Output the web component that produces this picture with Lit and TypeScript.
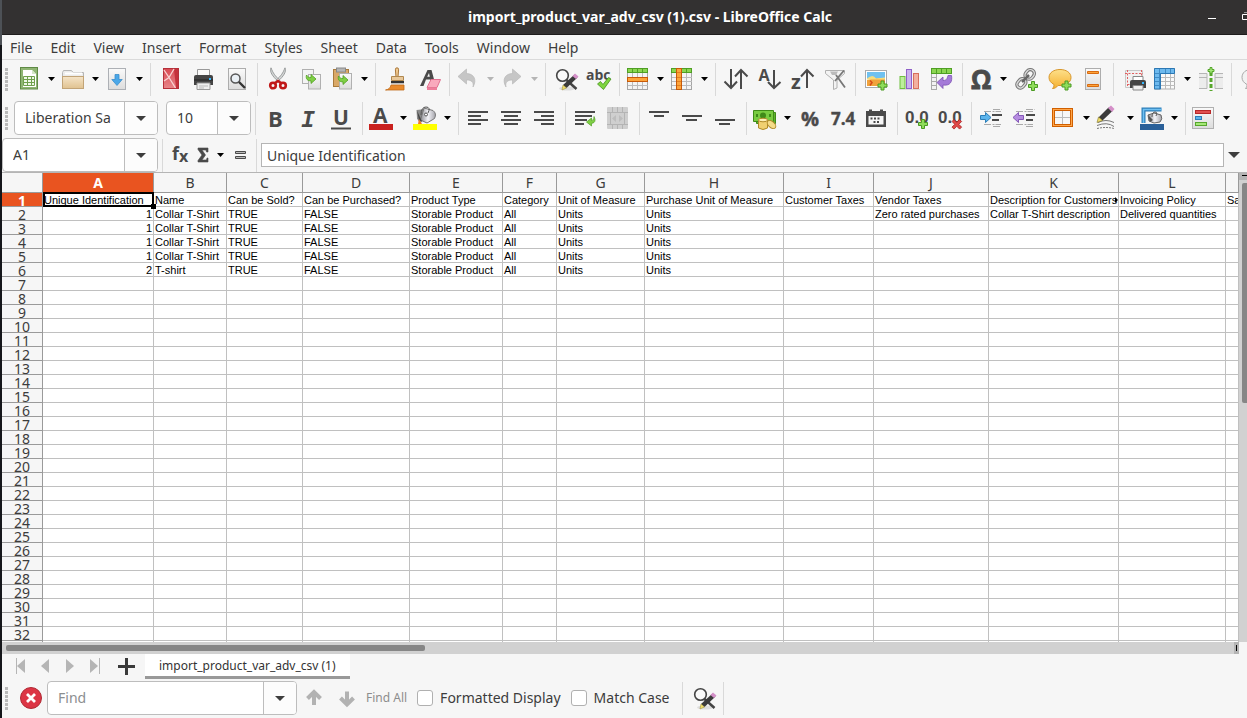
import { LitElement, html, svg, css, nothing } from "lit";
import { customElement, state } from "lit/decorators.js";
import { classMap } from "lit/directives/class-map.js";

const INK = "#4a4a4a";

const plus = (x: number, y: number) => svg`
  <path transform="translate(${x} ${y})" d="M3.5 .5h3v3h3v3h-3v3h-3v-3h-3v-3h3z" fill="#8fdc5a" stroke="#4a9a22"/>`;

const icons: Record<string, unknown> = {
  new: svg`
    <rect x="3.5" y=".5" width="17" height="21.5" fill="#8fb573" stroke="#5f8a45"/>
    <path d="M6 3h9l4 4v13H6z" fill="#fff"/><path d="M15 3l4 4h-4z" fill="#d5e6c8"/>
    <path d="M6.500 9.500h11v9h-11zM6.500 12.500h11M6.500 15.500h11M10.500 9.500v9M14.500 9.500v9" fill="#eef7e7" stroke="#6fa04c"/>`,
  open: svg`
    <path d="M1.500 21.500v-16l1-2h8l1.500 2h10.500v16z" fill="#ececec" stroke="#b5b5b5"/>
    <path d="M4 6.500h17" stroke="#fff" stroke-width="2"/>
    <rect x="1.500" y="9.500" width="21" height="12" fill="url(#tan)" stroke="#c2a477"/>`,
  save: svg`
    <rect x="3.500" y="1.500" width="17" height="21" fill="url(#paper)" stroke="#adb0b5"/>
    <path d="M10 7.500h4v5h3.200l-5.200 6-5.200-6H10z" fill="#4aa7e8" stroke="#3b8ecb" stroke-width=".8"/>`,
  pdf: svg`
    <rect x="5.500" y="1.500" width="15" height="20" fill="url(#red)" stroke="#b5303a"/>
    <path d="M16 2h4v19h-2z" fill="#c4323c"/>
    <path d="M6 3l5 7.500L6 14M11 10.500L16 2M11 10.500L17.500 21" fill="none" stroke="#f8d4d4" stroke-width="1.300"/>`,
  print: svg`
    <path d="M6.500 10V2.500h12V10" fill="#fafafa" stroke="#999"/>
    <path d="M3 10q0-2 2-2h15q2 0 2 2v8H3z" fill="#454545"/><path d="M3 13h19" stroke="#222"/>
    <rect x="18" y="11" width="2" height="2" fill="#36b8ff"/>
    <path d="M6 16h13v6.500H6z" fill="#eee" stroke="#999"/><path d="M8 19h9M8 21h5" stroke="#bbb"/>`,
  preview: svg`
    <rect x="4.500" y="1.500" width="17" height="21" fill="url(#paper)" stroke="#adadad"/>
    <path d="M14 14l7 7" stroke="#333" stroke-width="2.400"/><circle cx="11.500" cy="11.500" r="4.500" fill="#eaf0f5" stroke="#555" stroke-width="1.500"/>`,
  cut: svg`
    <path d="M6 .8c-1.500 4 1 8 7.500 14l1.500-1.500C10 9 8 6 6 .8zM20 .8c1.500 4-1 8-7.500 14L11 13.300C16 9 18 6 20 .8z" fill="#d5d7d7" stroke="#878a8a" stroke-width=".8"/>
    <g fill="none" stroke="#c01818" stroke-width="2.600"><circle cx="8" cy="18.500" r="2.800"/><circle cx="18" cy="18.500" r="2.800"/><path d="M10 16l3-2 3 2"/></g>`,
  copy: svg`
    <rect x="4.500" y="2.500" width="11" height="14" fill="#f4f4f4" stroke="#b0b0b0"/><rect x="10.500" y="7.500" width="12" height="14.500" fill="url(#paper)" stroke="#b0b0b0"/>
    <path d="M8.500 8c-1 4 1 6 4.500 5.800V16.500l5-4.500-5-4.500v3c-2 .2-3-.5-4.500-2.500z" fill="#7fcf45" stroke="#4f9f20" stroke-width=".8"/>`,
  paste: svg`
    <rect x="3.500" y="2.500" width="15" height="17" fill="#d9a867" stroke="#a87a3c"/><rect x="6.500" y="1" width="9" height="4" fill="#b5b5b5" stroke="#888"/>
    <rect x="9.500" y="6.500" width="12" height="15.500" fill="url(#paper)" stroke="#b0b0b0"/>
    <path d="M8.500 9c-1 4 1 6 4.500 5.800V17.500l5-4.500-5-4.500v3c-2 .2-3-.5-4.500-2.500z" fill="#7fcf45" stroke="#4f9f20" stroke-width=".8"/>`,
  brush: svg`
    <path d="M14 .8q1.800 0 1.600 2l-.6 7h-2l-.6-7q-.2-2 1.600-2z" fill="#f0c98f" stroke="#a8763a"/>
    <path d="M8.500 9.500h12v4h-12z" fill="#e8c89a" stroke="#b08850"/><path d="M8 14h13v2.500H8z" fill="#333"/><path d="M8 16.500h13V18H8z" fill="#eee"/>
    <path d="M8 18h13v5H2.500c3-.5 5-2 5.500-5z" fill="#e88a2c" stroke="#c06a18" stroke-width=".8"/>`,
  clear: svg`
    <path d="M4 19L11.500 3h4L19 16h-4l-.7-3.500H10L7.500 19zM11.200 9.800h2.600L13 6z" fill="${INK}" fill-rule="evenodd"/>
    <path d="M15 12.500h9.500l-3.500 8h-10z" fill="#f9a9bd" stroke="#e0708f"/><path d="M11 20.500h10v2.500H11z" fill="#ee7f9c"/>`,
  undo: svg`<path d="M2 9.500l8.500-7.500v4.500c7 0 11 6 6.500 13.500 1-5-1.500-7-6.500-7v4z" fill="#c6c6c6" stroke="#b4b4b4" stroke-width=".6"/>`,
  redo: svg`<path d="M21 9.500L12.500 2v4.500c-7 0-11 6-6.500 13.500-1-5 1.500-7 6.500-7v4z" fill="#c6c6c6" stroke="#b4b4b4" stroke-width=".6"/>`,
  find: svg`
    <ellipse cx="14" cy="21.500" rx="8" ry="2" fill="#ddd"/>
    <path d="M13.500 13l10 9" stroke="#444" stroke-width="2.500"/><circle cx="9.500" cy="8.500" r="5.800" fill="#fafafa" stroke="#444" stroke-width="1.600"/>
    <path d="M21.500 7.500l3 3L13.500 21l-3.500-3z" fill="#3b3b3b"/><path d="M19.500 9l2.500-2.500 3.500 3L23 12z" fill="#d48fc8"/><path d="M10 18l3.500 3-4.500 2z" fill="#f0dd6a" stroke="#96882c" stroke-width=".5"/>`,
  spell: svg`
    <text x="0" y="13" class="glyph" font-size="14" fill="${INK}">abc</text>
    <path d="M11.500 17l3-2.500 2.500 3 5.500-7 2.500 1.500-7.500 10.500z" fill="#7ed63f" stroke="#46901c" stroke-width=".8"/>`,
  rows: svg`
    <rect x="1.500" y="1.500" width="20" height="21" fill="#f4f4f4" stroke="#a5a5a5"/><path d="M6.500 5v17M11.500 5v17M16.500 5v17M2 18.500h20" stroke="#bbb"/>
    <rect x="1.500" y="1.500" width="20" height="4" fill="#8bd650" stroke="#4f9f24"/><path d="M6.500 2v4M11.500 2v4M16.500 2v4" stroke="#4f9f24"/>
    <rect x="1.500" y="10.500" width="20" height="4" fill="#fda43a" stroke="#c85a08"/>`,
  cols: svg`
    <rect x="1.500" y="1.500" width="20" height="21" fill="#f4f4f4" stroke="#a5a5a5"/><path d="M16.500 5v17M2 10.500h20M2 14.500h20M2 18.500h20" stroke="#bbb"/>
    <rect x="1.500" y="1.500" width="20" height="4" fill="#8bd650" stroke="#4f9f24"/><path d="M16.500 2v4" stroke="#4f9f24"/>
    <rect x="6.500" y="1.500" width="5" height="21" fill="#fda43a" stroke="#c85a08"/><path d="M7 5.500h4M7 10.500h4M7 14.500h4M7 18.500h4" stroke="#c85a08" opacity=".5"/>`,
  sort: svg`<path d="M8 2v18M1.500 14.500L8 21l6-6.500M18 22V3M12 9.500L18 3l6.500 6.500" fill="none" stroke="${INK}" stroke-width="2"/>`,
  asc: svg`<text x="2.500" y="14" class="glyph" font-size="16" fill="${INK}">A</text><path d="M18 3v18M12 15l6 6 6.500-6" fill="none" stroke="${INK}" stroke-width="2"/>`,
  desc: svg`<text x="2" y="22" class="glyph" font-size="20" fill="${INK}">z</text><path d="M18 21V3M12 9.500L18 3l6.500 6.500" fill="none" stroke="${INK}" stroke-width="2"/>`,
  filter: svg`
    <path d="M3.500 3.500h19v3L15 13v8l-3.500 1.500V13L3.500 6.500z" fill="#f3f3f3" stroke="#b0b0b0"/>
    <path d="M8 4.500h8L14 8h-4z" fill="#bbb"/><path d="M14 8l9 12.500M22 3.500L13 14" stroke="#777" stroke-width="1.800"/>`,
  image: svg`
    <rect x="2.500" y="3.500" width="21" height="17" fill="#fff" stroke="#aaa"/><path d="M4 5h18v7H4z" fill="#6fc1f0"/><path d="M4 13q9-3 18-1v7H4z" fill="#f0a23c"/>
    <path d="M4 11.500q6-5 9 0l9-1v2H4z" fill="#f7dc7c"/><path d="M7 13.500l2 2-2 3" stroke="#d84a18" stroke-width="1.500" fill="none"/>${plus(14.5, 13.5)}`,
  chart: svg`
    <rect x="4" y="9.500" width="5" height="12" fill="#bdee9c" stroke="#6fbf3f"/><rect x="10.500" y="2.500" width="5" height="19" fill="#cbb0ee" stroke="#8f60c8"/>
    <rect x="17.500" y="6.500" width="5" height="15" fill="#f2b0a0" stroke="#d8705c"/><path d="M2.500 22.500h21.500" stroke="#ddd"/>`,
  pivot: svg`
    <rect x="2.500" y="6" width="5" height="16.500" fill="#f3f3f3" stroke="#aaa"/><path d="M3 10.500h4M3 14.500h4M3 18.500h4" stroke="#aaa"/>
    <rect x="2.500" y="1.500" width="20" height="5" fill="#8bd650" stroke="#4f9f24"/><path d="M7.500 2v4M12.500 2v4M17.500 2v4" stroke="#4f9f24"/>
    <path d="M8 15.500l6-5.500v3.500c4 0 4-2 5-5h3.500c1 6-1 10.500-8.500 9.500v3.500z" fill="#a47ad8" stroke="#7c50b4" stroke-width=".8"/>`,
  omega: svg`<text x="2" y="22" class="glyph" font-size="26" fill="${INK}" stroke="${INK}" stroke-width=".8">Ω</text>`,
  link: svg`
    <g fill="none"><g stroke="#777" stroke-width="3.400"><rect x="12" y="2.500" width="8" height="10" rx="4" transform="rotate(40 16 7)"/><rect x="4" y="11" width="7" height="10" rx="3.500" transform="rotate(40 7 16)"/></g>
    <g stroke="#ddd" stroke-width="1.400"><rect x="12" y="2.500" width="8" height="10" rx="4" transform="rotate(40 16 7)"/><rect x="4" y="11" width="7" height="10" rx="3.500" transform="rotate(40 7 16)"/></g><path d="M8 15l7-7" stroke="#666" stroke-width="2.500"/></g>${plus(14, 14)}`,
  comment: svg`
    <path d="M13 2.500c6 0 11 3 11 8s-5 8-11 8c-1 0-1.500 0-2 0-1.500 2-3.500 3-5.500 3 1-1 1.500-2.500 1.500-4C4 16 2 13.500 2 10.500c0-5 5-8 11-8z" fill="url(#amber)" stroke="#d8962a"/>${plus(14.5, 13.5)}`,
  header: svg`
    <rect x="5.500" y="1.500" width="15" height="21" fill="url(#paper)" stroke="#adadad"/>
    <path d="M7.500 4.500h11v2h-11zM7.500 17.500h11v2h-11z" fill="#fda43a" stroke="#d86a10"/>`,
  printarea: svg`
    <path d="M4.500 3.500h17v17h-17z" fill="#f1f1f1" stroke="#c8c8c8"/><path d="M6.500 3v17M20.500 3v8M4 6.500h18M6.500 17.500h5" stroke="#e06060" stroke-dasharray="2 1.500"/>
    <path d="M12 13V9.500h10V13" fill="#fff" stroke="#888"/><path d="M9 15q0-2 2-2h12q2 0 2 2v6H9z" fill="#444"/><rect x="21" y="15" width="2" height="2" fill="#36b8ff"/><path d="M12 18.500h10v4.500H12z" fill="#eee" stroke="#888"/>`,
  freeze: svg`
    <rect x="1.500" y="1.500" width="20" height="20.500" fill="#fafafa" stroke="#b0b0b0"/><path d="M12.500 6v16M17.500 6v16M7 10.500h15M7 14.500h15M7 18.500h15" stroke="#bbb"/>
    <path d="M1.500 1.500h20v5h-14v15.500h-6z" fill="#6db9ee" stroke="#2c78b4"/><path d="M6.500 2v20M12.500 2v4M17.500 2v4M2 6.500h6M2 10.500h5M2 14.500h5M2 18.500h5" stroke="#2c78b4" opacity=".7"/>`,
  split: svg`
    <path d="M1 6.500h8v15H1M25 6.500h-8v15h8" fill="#ececec" stroke="#b5b5b5"/><path d="M1 10.500h8M17 10.500h8" stroke="#b5b5b5"/>
    <path d="M13 5v19" stroke="#57a62c" stroke-width="3" stroke-dasharray="4 2"/><path d="M12 .5h2v2h2v2h-2v2h-2v-2h-2v-2h2z" fill="#a5e878" stroke="#57a62c"/>`,
  bubble: svg`<path d="M12 2.500c6 0 10 3 10 8s-4 8-10 8c-1.500 2-3.500 3-5.500 3 1-1 1.500-2.500 1.500-4-3-1.500-5-4-5-7 0-5 4-8 9-8z" fill="#f2f2f2" stroke="#a8a8a8"/>`,
  bold: svg`<text x="5" y="21" class="glyph" font-size="22" fill="${INK}">B</text>`,
  italic: svg`<text x="5" y="21" class="mono" font-size="23" fill="${INK}">I</text>`,
  underline: svg`<text x="4" y="18.500" class="glyph" font-size="21" fill="${INK}">U</text><path d="M2 22.500h20" stroke="${INK}" stroke-width="2"/>`,
  fontcolor: svg`<text x="4" y="17" class="glyph" font-size="21" fill="${INK}">A</text><path d="M0 18h24v6H0z" fill="#c9211e"/>`,
  highlight: svg`
    <path d="M3.500 4l9 -1 1 8.500-6.500 6-3-5z" fill="#8a8a8a"/><path d="M11 2l9 2.500q4 3 1.500 8L14 17 7.500 14z" fill="url(#steel)" stroke="#777"/>
    <path d="M4 4.500l5 11-3-1z" fill="#444"/><path d="M8 9q0-8 5-8t2 6" fill="none" stroke="#555"/><circle cx="13" cy="8.500" r="1.500" fill="#fff" stroke="#555"/>
    <path d="M6 13l3 5H5z" fill="#f07a28"/><path d="M0 18h24v6H0z" fill="#ffff00"/>`,
  left: svg`<path d="M2 6h20M2 10h13M2 14h20M2 18h13" stroke="${INK}" stroke-width="2"/>`,
  center: svg`<path d="M2 6h20M5 10h14M2 14h20M5 18h14" stroke="${INK}" stroke-width="2"/>`,
  right: svg`<path d="M2 6h20M9 10h13M2 14h20M9 18h13" stroke="${INK}" stroke-width="2"/>`,
  wrap: svg`<path d="M2 6h20M2 10h17M2 14h12M2 18h9" stroke="${INK}" stroke-width="2"/><path d="M13.500 16l5-4v2.500q3 0 2.500-4 3 6-2.500 7V20z" fill="#7fcf45" stroke="#4f9f20" stroke-width=".7"/>`,
  merge: svg`<rect x="1" y="1" width="21" height="22" rx="1" fill="#cfcfcf"/><path d="M1 6.500h21M1 18.500h21M6.500 1v5.500M11.500 1v5.500M16.500 1v5.500M6.500 18.500v4.500M11.500 18.500v4.500M16.500 18.500v4.500M4.500 6.500v12M18.500 6.500v12" stroke="#b4b4b4"/><path d="M10 9l-4 3.500 4 3.500zM13 9l4 3.500-4 3.500z" fill="#bdbdbd"/>`,
  top: svg`<path d="M2 6h20M7 10h10" stroke="${INK}" stroke-width="2"/>`,
  middle: svg`<path d="M2 10h20M6 14h11" stroke="${INK}" stroke-width="2"/>`,
  bottom: svg`<path d="M2 14h20M6 18h11" stroke="${INK}" stroke-width="2"/>`,
  currency: svg`
    <path d="M3.500 6.500h19v11h-19z" fill="#5fb52c" stroke="#3f8a18"/><path d="M.500 4.500h20v11H.500z" fill="#78cc40" stroke="#3f8a18"/><circle cx="10" cy="9.500" r="3" fill="#3f8a18"/><path d="M3 8h2v3H3zM16 8h2v3h-2z" fill="#3f8a18"/>
    <path d="M5.500 14v8q4.500 3 9 0v-8z" fill="#f0d070" stroke="#b08a28"/><ellipse cx="10" cy="14" rx="4.500" ry="1.800" fill="#fcefb8" stroke="#b08a28"/><ellipse cx="18.500" cy="18.500" rx="5" ry="3" transform="rotate(40 18.500 18.500)" fill="#f5dc88" stroke="#b08a28"/>`,
  percent: svg`<text x="3" y="20" class="glyph" font-size="20" fill="${INK}" stroke="${INK}" stroke-width=".4">%</text>`,
  number: svg`<text x="0" y="19" class="glyph" font-size="17" fill="${INK}" stroke="${INK}" stroke-width=".4">7.4</text>`,
  date: svg`<path d="M2 5h3V3.500h3V5h8V3.500h3V5h3v16H2zM4.500 10v8.500h15V10z" fill="${INK}" fill-rule="evenodd"/><path d="M6.500 12.500h2m1.500 0h2m1.500 0h2m-6 3.500h2m1.500 0h2" stroke="${INK}" stroke-width="2"/>`,
  adddec: svg`<text x="0" y="17" class="digits" font-size="17" fill="${INK}">0.0</text>${plus(13, 13)}`,
  deldec: svg`<text x="0" y="17" class="digits" font-size="17" fill="${INK}">0.0</text><path d="M14 15.500l2-2 2.800 2.800 2.800-2.800 2 2-2.800 2.800 2.800 2.800-2 2-2.800-2.800-2.800 2.800-2-2 2.800-2.800z" fill="#e04848" stroke="#a82020" stroke-width=".8"/>`,
  indent: svg`
    <path d="M5 5.500h17M5 18.500h17M14 3.500h9M14 20.500h7" stroke="#aaa" stroke-dasharray="7 1.500 2 1"/><path d="M13 9h10M13 14h7" stroke="${INK}" stroke-width="2"/>
    <path d="M1.500 9.500h5V6.500l5.500 5-5.500 5v-3h-5z" fill="#5bb4ec" stroke="#2c7eb8"/>`,
  outdent: svg`
    <path d="M4 5.500h17M4 18.500h17M14 3.500h9M14 20.500h7" stroke="#aaa" stroke-dasharray="7 1.500 2 1"/><path d="M14 9h9M14 14h7" stroke="${INK}" stroke-width="2"/>
    <path d="M11.500 9.500h-5V6.500l-5.500 5 5.500 5v-3h5z" fill="#b58ce0" stroke="#8458b8"/>`,
  borders: svg`<rect x="1.500" y="3.500" width="18" height="16" fill="#f7f7f7" stroke="#d05f00" stroke-width="3"/><rect x="1.500" y="3.500" width="18" height="16" fill="none" stroke="#ffa64a"/><path d="M10.500 5v13M3 11.500h15" stroke="#bbb"/>`,
  linestyle: svg`
    <path d="M2 16.500q8-4 16 0M1 19.500q10-4 17 1" fill="none" stroke="#777"/><path d="M1 22.500q9-2 17 0" fill="none" stroke="#777" stroke-dasharray="2 1"/>
    <path d="M12.500 1.500l4 3.500L6.500 14.500l-4-3z" fill="#3b3b3b"/><path d="M12 2l3-2.500 3.500 3.500-2.500 3z" fill="#d48fc8"/><path d="M2.500 11l4 3.500-5.500 2z" fill="#f0dd6a" stroke="#7f7428" stroke-width=".6"/>`,
  bordercolor: svg`
    <path d="M3.500 17V3.500h18" fill="none" stroke="#2c7eb8" stroke-width="4"/><path d="M3.500 17V3.500h18" fill="none" stroke="#6fc0f2" stroke-width="1.600"/>
    <path d="M8 9l6-2 7 2q2 4-1 7l-6 1-5-2z" fill="url(#steel)" stroke="#666"/><path d="M8 9l2 7 3-2z" fill="#555"/><path d="M12 11q0-5 3-5t1 4" fill="none" stroke="#555"/><path d="M0 18h24v6H0z" fill="#2a6099"/>`,
  conditional: svg`
    <rect x=".500" y="1.500" width="21" height="21" fill="url(#paper)" stroke="#b0b0b0"/>
    <rect x="3.500" y="4.500" width="15" height="3" fill="#e05050" stroke="#b82828"/><rect x="3.500" y="10.500" width="6" height="3" fill="#5bb4ec" stroke="#2c7eb8"/><rect x="3.500" y="16.500" width="11" height="3" fill="#a5e878" stroke="#57a62c"/>`,
  up: svg`<path d="M5.500 12.500L12 6l6.500 6.500M12 6.500V19" fill="none" stroke="#b2b2b2" stroke-width="4"/>`,
  down: svg`<path d="M5.500 12L12 18.500l6.500-6.500M12 18V5.500" fill="none" stroke="#b2b2b2" stroke-width="4"/>`,
};

type Tool = { icon: string; label: string; menu?: boolean; disabled?: boolean } | "|";
const t = (icon: string, label: string, menu = false, disabled = false): Tool => ({ icon, label, menu, disabled });

const STANDARD: Tool[] = [
  t("new", "New", true), t("open", "Open", true), t("save", "Save", true), "|",
  t("pdf", "Export as PDF"), t("print", "Print"), t("preview", "Print Preview"), "|",
  t("cut", "Cut"), t("copy", "Copy"), t("paste", "Paste", true), "|",
  t("brush", "Clone Formatting"), t("clear", "Clear Formatting"), "|",
  t("undo", "Undo", true, true), t("redo", "Redo", true, true), "|",
  t("find", "Find and Replace"), t("spell", "Spelling"), "|",
  t("rows", "Row", true), t("cols", "Column", true), "|",
  t("sort", "Sort"), t("asc", "Sort Ascending"), t("desc", "Sort Descending"), t("filter", "AutoFilter"), "|",
  t("image", "Insert Image"), t("chart", "Insert Chart"), t("pivot", "Pivot Table"), "|",
  t("omega", "Special Character", true), t("link", "Insert Hyperlink"), t("comment", "Insert Comment"), t("header", "Headers and Footers"), "|",
  t("printarea", "Define Print Area"), t("freeze", "Freeze Rows and Columns", true), t("split", "Split Window"), "|",
  t("bubble", "Show Draw Functions"),
];

const FORMATTING: Tool[] = [
  "|", t("bold", "Bold"), t("italic", "Italic"), t("underline", "Underline"), "|",
  t("fontcolor", "Font Color", true), t("highlight", "Highlighting Color", true), "|",
  t("left", "Align Left"), t("center", "Center Horizontally"), t("right", "Align Right"), "|",
  t("wrap", "Wrap Text"), t("merge", "Merge Cells", false, true), "|",
  t("top", "Align Top"), t("middle", "Center Vertically"), t("bottom", "Align Bottom"), "|",
  t("currency", "Format as Currency", true), t("percent", "Format as Percent"), t("number", "Format as Number"), t("date", "Format as Date"), "|",
  t("adddec", "Add Decimal Place"), t("deldec", "Delete Decimal Place"), "|",
  t("indent", "Increase Indent"), t("outdent", "Decrease Indent"), "|",
  t("borders", "Borders", true), t("linestyle", "Border Style", true), t("bordercolor", "Border Color", true), "|",
  t("conditional", "Conditional", true),
];

const MENUS = ["File", "Edit", "View", "Insert", "Format", "Styles", "Sheet", "Data", "Tools", "Window", "Help"];

const COLUMNS: [string, number][] = [
  ["A", 111], ["B", 73], ["C", 76], ["D", 107], ["E", 93], ["F", 54], ["G", 88],
  ["H", 139], ["I", 90], ["J", 115], ["K", 130], ["L", 107],
];

const variant = ["1", "Collar T-Shirt", "TRUE", "FALSE", "Storable Product", "All", "Units", "Units"];
const DATA: string[][] = [
  ["Unique Identification", "Name", "Can be Sold?", "Can be Purchased?", "Product Type", "Category", "Unit of Measure",
    "Purchase Unit of Measure", "Customer Taxes", "Vendor Taxes", "Description for Customers", "Invoicing Policy", "Sa"],
  [...variant, "", "Zero rated purchases", "Collar T-Shirt description", "Delivered quantities"],
  variant, variant, variant,
  ["2", "T-shirt", "TRUE", "FALSE", "Storable Product", "All", "Units", "Units"],
];
const ROW_COUNT = 33;

@customElement("app-root")
export class AppRoot extends LitElement {
  @state() private selectedRow = 0;
  @state() private selectedCol = 0;

  static styles = css`
    :host {
      display: flex;
      flex-direction: column;
      box-sizing: border-box;
      height: 100vh;
      padding-left: 2px;
      overflow: hidden;
      background: linear-gradient(#4d5156 45px, #15161a 45px) 0 0 / 2px 100% no-repeat, #f6f6f6;
      color: #3c3c3c;
      font: 14px/20px "Noto Sans", "Open Sans", sans-serif;
    }
    * { box-sizing: border-box; }
    button, input {
      margin: 0;
      padding: 0;
      border: 0;
      background: none;
      color: inherit;
      font: inherit;
      border-radius: 0;
      outline: 0;
    }
    svg { display: block; flex: none; overflow: visible; }
    .defs { position: absolute; width: 0; height: 0; }
    .glyph { font-family: "Open Sans", "Noto Sans", sans-serif; font-weight: 700; }
    .mono { font-family: "Liberation Mono", monospace; font-weight: 700; font-style: italic; }
    .digits { font-family: "Liberation Sans", Arial, sans-serif; font-weight: 700; }

    .titlebar {
      display: flex;
      align-items: center;
      flex: none;
      height: 35px;
      padding-left: 109px;
      background: #333131;
      border-bottom: 1px solid #1e1c1c;
      color: #fff;
    }
    .title { flex: 1; margin: 0; text-align: center; font-size: 14px; font-weight: 700; white-space: nowrap; }
    .window-buttons { display: flex; gap: 12px; width: 58px; flex: none; overflow: hidden; }
    .window-buttons button { flex: none; width: 40px; height: 24px; }

    .menubar { display: flex; gap: 2px; flex: none; height: 25px; padding-top: 3px; border-bottom: 1px solid #dadada; }
    .menubar button { padding: 0 8px; height: 20px; white-space: nowrap; }

    .toolbar { display: flex; align-items: center; flex: none; overflow: hidden; white-space: nowrap; }
    .standard { height: 38px; }
    .formatting { height: 40px; }
    .grip {
      flex: none;
      width: 3px;
      height: 23px;
      margin: 0 6px 0 3px;
      background: repeating-linear-gradient(#b9b9b9 0 3px, transparent 3px 4px);
    }
    .sep { flex: none; width: 1px; height: 33px; margin: 0 3px 0 4px; background: #d9d9d9; }
    .tool { flex: none; height: 24px; padding: 0 5px 0 4px; }
    .tool.split { padding: 0 4px 0 3px; }
    .drop { flex: none; width: 13px; height: 24px; display: flex; align-items: center; justify-content: center; }
    .drop svg { fill: #000; }
    .drop:disabled svg { fill: #b5b5b5; }

    .combo {
      display: flex;
      flex: none;
      height: 34px;
      border: 1px solid #bdbdbd;
      border-radius: 4px;
      background: #fff;
      overflow: hidden;
    }
    .combo input { flex: 1; min-width: 0; padding-left: 10px; }
    .combo input::placeholder { color: #8b8e90; opacity: 1; }
    .combo button {
      width: 33px;
      flex: none;
      display: flex;
      align-items: center;
      justify-content: center;
      border-left: 1px solid #bdbdbd;
      background: #fcfcfc;
    }
    .combo svg, .expand svg { fill: #3d3d3d; }
    .font-name { width: 144px; margin-right: 8px; }
    .font-size { width: 85px; }
    .cell-name { width: 156px; }
    .find-text { width: 250px; }

    .formulabar { height: 34px; }
    .formulabar .tool { padding: 0; width: 27px; display: flex; justify-content: center; }
    .formulabar .sum { width: 19px; }
    .formulabar .drop { width: 17px; }
    .formulabar .equals { width: 23px; }
    .formula { flex: 1; min-width: 0; height: 24px; margin-left: 1px; padding-left: 5px; border: 1px solid #b5b5b5; background: #fff; }
    .expand { flex: none; width: 23px; height: 24px; display: flex; align-items: center; padding-left: 4px; }

    .sheet { flex: 1; min-height: 0; display: grid; grid-template: 1fr 12px / 1fr 8px; border-top: 1px solid #b5b5b5; }
    .view { overflow: hidden; background: #fff; }
    .cells { width: 100%; table-layout: fixed; border-collapse: separate; border-spacing: 0; color: #000; }
    .cells .row-head { width: 41px; }
    .cells th {
      padding: 0;
      background: #f6f6f6;
      border-right: 1px solid #9a9a9a;
      border-bottom: 1px solid #9a9a9a;
      color: #3c3c3c;
      font-weight: 400;
      font-size: 14px;
    }
    .cells thead th { height: 20px; line-height: 19px; }
    .cells tbody th { height: 14px; line-height: 13px; }
    .cells th.active { background: #e95420; color: #fff; font-weight: 700; }
    .cells td {
      height: 14px;
      padding: 2px 1px 0;
      border-right: 1px solid #c0c0c0;
      border-bottom: 1px solid #c0c0c0;
      font: 11px/11px "Liberation Sans", Arial, sans-serif;
      white-space: nowrap;
      overflow: hidden;
    }
    .cells th div { height: 13px; line-height: 15px; }
    .cells td.num { text-align: right; }
    .cells td.cut { position: relative; }
    .cells td.cut::after {
      content: "";
      position: absolute;
      right: 0;
      top: 4px;
      border: 3px solid transparent;
      border-left-color: #000;
      border-right: 0;
    }
    .cells td.cursor { position: relative; overflow: visible; }
    .cells td.cursor::before { content: ""; position: absolute; inset: -1px -1px -1px 0; border: 2px solid #000; }
    .cells td.cursor::after { content: ""; position: absolute; right: -3px; bottom: -3px; width: 5px; height: 5px; background: #000; }

    .vscroll { display: flex; flex-direction: column; background: #d1d1d1; }
    .vscroll .split-mark { height: 7px; padding: 2px 0 0 3px; background: #b4b4b4; }
    .vscroll .split-mark::before { content: ""; display: block; height: 1px; background: #000; }
    .vscroll .thumb { margin: 3px 0 0 3px; height: 47%; border-radius: 2px 0 0 2px; background: #868686; }
    .hscroll { display: flex; align-items: center; justify-content: space-between; padding-left: 4px; background: #d1d1d1; }
    .hscroll .thumb { width: 34%; height: 6px; border-radius: 2px; background: #868686; }
    .hscroll .split-mark { width: 5px; height: 12px; padding: 3px 2px; background: #b4b4b4; }
    .hscroll .split-mark::before { content: ""; display: block; width: 1px; height: 6px; background: #000; }

    .tabs { display: flex; flex: none; height: 27px; padding-left: 12px; }
    .tabs .nav { width: 25px; height: 24px; }
    .tabs .add { width: 27px; height: 24px; margin: 0 4px 0 0; }
    .tabs .tab { height: 25px; padding: 1px 14px 0; border-bottom: 3px solid #999; background: #fff; font-size: 12px; line-height: 21px; color: #333; }

    .findbar { display: flex; align-items: center; flex: none; height: 37px; padding-bottom: 3px; white-space: nowrap; }
    .findbar .close { width: 24px; height: 24px; margin-right: 4px; }
    .findbar .grip { margin-right: 11px; }
    .findbar .tool { padding: 0 4px 0 5px; }
    .findbar .all { margin: 0 10px 0 3px; font-size: 12px; color: #8d8d8d; }
    .findbar label { display: flex; align-items: center; gap: 7px; margin-right: 10px; }
    .findbar label + .sep { margin-left: 2px; }
    .findbar input[type="checkbox"] { appearance: none; width: 16px; height: 16px; border: 1px solid #b0b0b0; border-radius: 3px; background: #fff; }
    .findbar input[type="checkbox"]:checked { background: #e95420; }
  `;

  private icon(name: string) {
    return html`<svg width="24" height="24" viewBox="0 0 24 24" aria-hidden="true">${icons[name]}</svg>`;
  }

  private caret(big = false) {
    return big
      ? html`<svg width="10" height="5" viewBox="0 0 10 5" aria-hidden="true"><path d="M0 0h10L5 5z" /></svg>`
      : html`<svg width="7" height="4" viewBox="0 0 7 4" aria-hidden="true"><path d="M0 0h7L3.500 4z" /></svg>`;
  }

  private tools(list: Tool[]) {
    return list.map((item) =>
      item === "|"
        ? html`<span class="sep"></span>`
        : html`<button class=${classMap({ tool: true, split: !!item.menu })} aria-label=${item.label} ?disabled=${item.disabled}>${this.icon(item.icon)}</button>${item.menu
            ? html`<button class="drop" aria-label="${item.label} options" ?disabled=${item.disabled}>${this.caret()}</button>`
            : nothing}`);
  }

  private combo(cls: string, label: string, value: string, placeholder = "") {
    return html`<div class="combo ${cls}">
      <input type="text" aria-label=${label} .value=${value} placeholder=${placeholder} />
      <button aria-label="${label} list">${this.caret(true)}</button>
    </div>`;
  }

  private select(row: number, col: number) {
    this.selectedRow = row;
    this.selectedCol = col;
  }

  private cell(row: number, col: number) {
    const text = DATA[row]?.[col] ?? "";
    const cls = classMap({
      num: /^\d+$/.test(text),
      cut: row === 0 && col === 10,
      cursor: row === this.selectedRow && col === this.selectedCol,
    });
    return html`<td class=${cls} @click=${() => this.select(row, col)}>${text}</td>`;
  }

  private sheet() {
    const rows = Array.from({ length: ROW_COUNT }, (_, i) => i);
    return html`<table class="cells">
      <colgroup>
        <col class="row-head" />
        ${COLUMNS.map(([, width]) => html`<col style="width:${width}px" />`)}
        <col />
      </colgroup>
      <thead>
        <tr>
          <th></th>
          ${COLUMNS.map(([name], i) => html`<th scope="col" class=${classMap({ active: i === this.selectedCol })}>${name}</th>`)}
          <th></th>
        </tr>
      </thead>
      <tbody>
        ${rows.map((r) => html`<tr>
          <th scope="row" class=${classMap({ active: r === this.selectedRow })}><div>${r + 1}</div></th>
          ${Array.from({ length: COLUMNS.length + 1 }, (_, c) => this.cell(r, c))}
        </tr>`)}
      </tbody>
    </table>`;
  }

  render() {
    const name = (this.selectedCol < COLUMNS.length ? COLUMNS[this.selectedCol][0] : "M") + (this.selectedRow + 1);
    return html`
      <svg class="defs" aria-hidden="true">
        <linearGradient id="paper" x2="0" y2="1"><stop stop-color="#fafafa" /><stop offset="1" stop-color="#dcdcdc" /></linearGradient>
        <linearGradient id="tan" x2="0" y2="1"><stop stop-color="#f5e4c8" /><stop offset="1" stop-color="#e0c290" /></linearGradient>
        <linearGradient id="red" x2="0" y2="1"><stop stop-color="#d84a52" /><stop offset="1" stop-color="#e8868a" /></linearGradient>
        <linearGradient id="amber" x2="0" y2="1"><stop stop-color="#fde08a" /><stop offset="1" stop-color="#f5b030" /></linearGradient>
        <linearGradient id="steel" x2="1" y2="0"><stop stop-color="#8a8a90" /><stop offset=".5" stop-color="#f4f4f8" /><stop offset="1" stop-color="#a5a5ac" /></linearGradient>
      </svg>

      <header class="titlebar">
        <h1 class="title">import_product_var_adv_csv (1).csv - LibreOffice Calc</h1>
        <div class="window-buttons">
          <button aria-label="Minimize"><svg width="40" height="24" viewBox="0 0 40 24"><path d="M19 13.500h8" stroke="#fff" /></svg></button>
          <button aria-label="Maximize"><svg width="40" height="24" viewBox="0 0 40 24"><path d="M3 7.500h8" stroke="#999" /><path d="M1.500 9.500h9v5h-9z" fill="none" stroke="#fff" /></svg></button>
        </div>
      </header>

      <nav class="menubar" aria-label="Menu">${MENUS.map((m) => html`<button>${m}</button>`)}</nav>

      <div class="toolbar standard" role="toolbar" aria-label="Standard">
        <span class="grip"></span>${this.tools(STANDARD)}
      </div>
      <div class="toolbar formatting" role="toolbar" aria-label="Formatting">
        <span class="grip"></span>
        ${this.combo("font-name", "Font Name", "Liberation Sa")}${this.combo("font-size", "Font Size", "10")}${this.tools(FORMATTING)}
      </div>
      <div class="toolbar formulabar">
        ${this.combo("cell-name", "Name Box", name)}<span class="sep"></span>
        <button class="tool" aria-label="Function Wizard"><svg width="18" height="24" viewBox="0 0 18 24"><text x="1" y="17" class="glyph" font-size="18" fill=${INK}>f</text><text x="8" y="19" class="glyph" font-size="16" fill=${INK}>x</text></svg></button>
        <button class="tool sum" aria-label="Select Function"><svg width="12" height="24" viewBox="0 0 12 24"><path d="M1 5h10v4H9.500L9 7H5l3.500 5L5 17h4.500l.5-2h1v4H1v-1.500L5 12 1 6.500z" fill=${INK} stroke=${INK} stroke-width=".6" /></svg></button>
        <button class="drop" aria-label="Function list">${this.caret()}</button>
        <button class="tool equals" aria-label="Formula"><svg width="12" height="24" viewBox="0 0 12 24"><path d="M.500 8.500h10v2H.500zM.500 13.500h10v2H.500z" fill="#bbb" stroke=${INK} /></svg></button>
        <span class="sep"></span>
        <input class="formula" type="text" aria-label="Input line" .value=${DATA[this.selectedRow]?.[this.selectedCol] ?? ""} />
        <button class="expand" aria-label="Expand Formula Bar"><svg width="12" height="6" viewBox="0 0 12 6"><path d="M0 0h12L6 6z" /></svg></button>
      </div>

      <main class="sheet">
        <div class="view">${this.sheet()}</div>
        <div class="vscroll"><div class="split-mark"></div><div class="thumb"></div></div>
        <div class="hscroll"><div class="thumb"></div><div class="split-mark"></div></div>
      </main>

      <div class="tabs">
        <button class="nav" aria-label="First Sheet"><svg width="24" height="24"><path d="M2.500 4v16" stroke="#b5b5b5" /><path d="M11 5v14L3 12z" fill="#b5b5b5" /></svg></button>
        <button class="nav" aria-label="Previous Sheet"><svg width="24" height="24"><path d="M10 5v14L2 12z" fill="#b5b5b5" /></svg></button>
        <button class="nav" aria-label="Next Sheet"><svg width="24" height="24"><path d="M2 5v14l8-7z" fill="#b5b5b5" /></svg></button>
        <button class="nav" aria-label="Last Sheet"><svg width="24" height="24"><path d="M1 5v14l8-7z" fill="#b5b5b5" /><path d="M10.500 4v16" stroke="#b5b5b5" /></svg></button>
        <button class="add" aria-label="Add Sheet"><svg width="24" height="24"><path d="M12.500 4v17M4 12.500h17" stroke="#3a3a3a" stroke-width="3" /></svg></button>
        <button class="tab">import_product_var_adv_csv (1)</button>
      </div>

      <div class="findbar" role="search">
        <span class="grip"></span>
        <button class="close" aria-label="Close Find Bar"><svg width="24" height="24"><circle cx="12" cy="12" r="10.500" fill="#dc3545" stroke="#b02a34" /><path d="M8 8l8 8M16 8l-8 8" stroke="#fff" stroke-width="2.800" /></svg></button>
        ${this.combo("find-text", "Find", "", "Find")}
        <button class="tool" aria-label="Find Previous" disabled>${this.icon("up")}</button>
        <button class="tool" aria-label="Find Next" disabled>${this.icon("down")}</button>
        <button class="all" disabled>Find All</button>
        <label><input type="checkbox" />Formatted Display</label>
        <label><input type="checkbox" />Match Case</label>
        <span class="sep"></span>
        <button class="tool" aria-label="Find and Replace">${this.icon("find")}</button>
        <span class="sep"></span>
      </div>
    `;
  }
}
